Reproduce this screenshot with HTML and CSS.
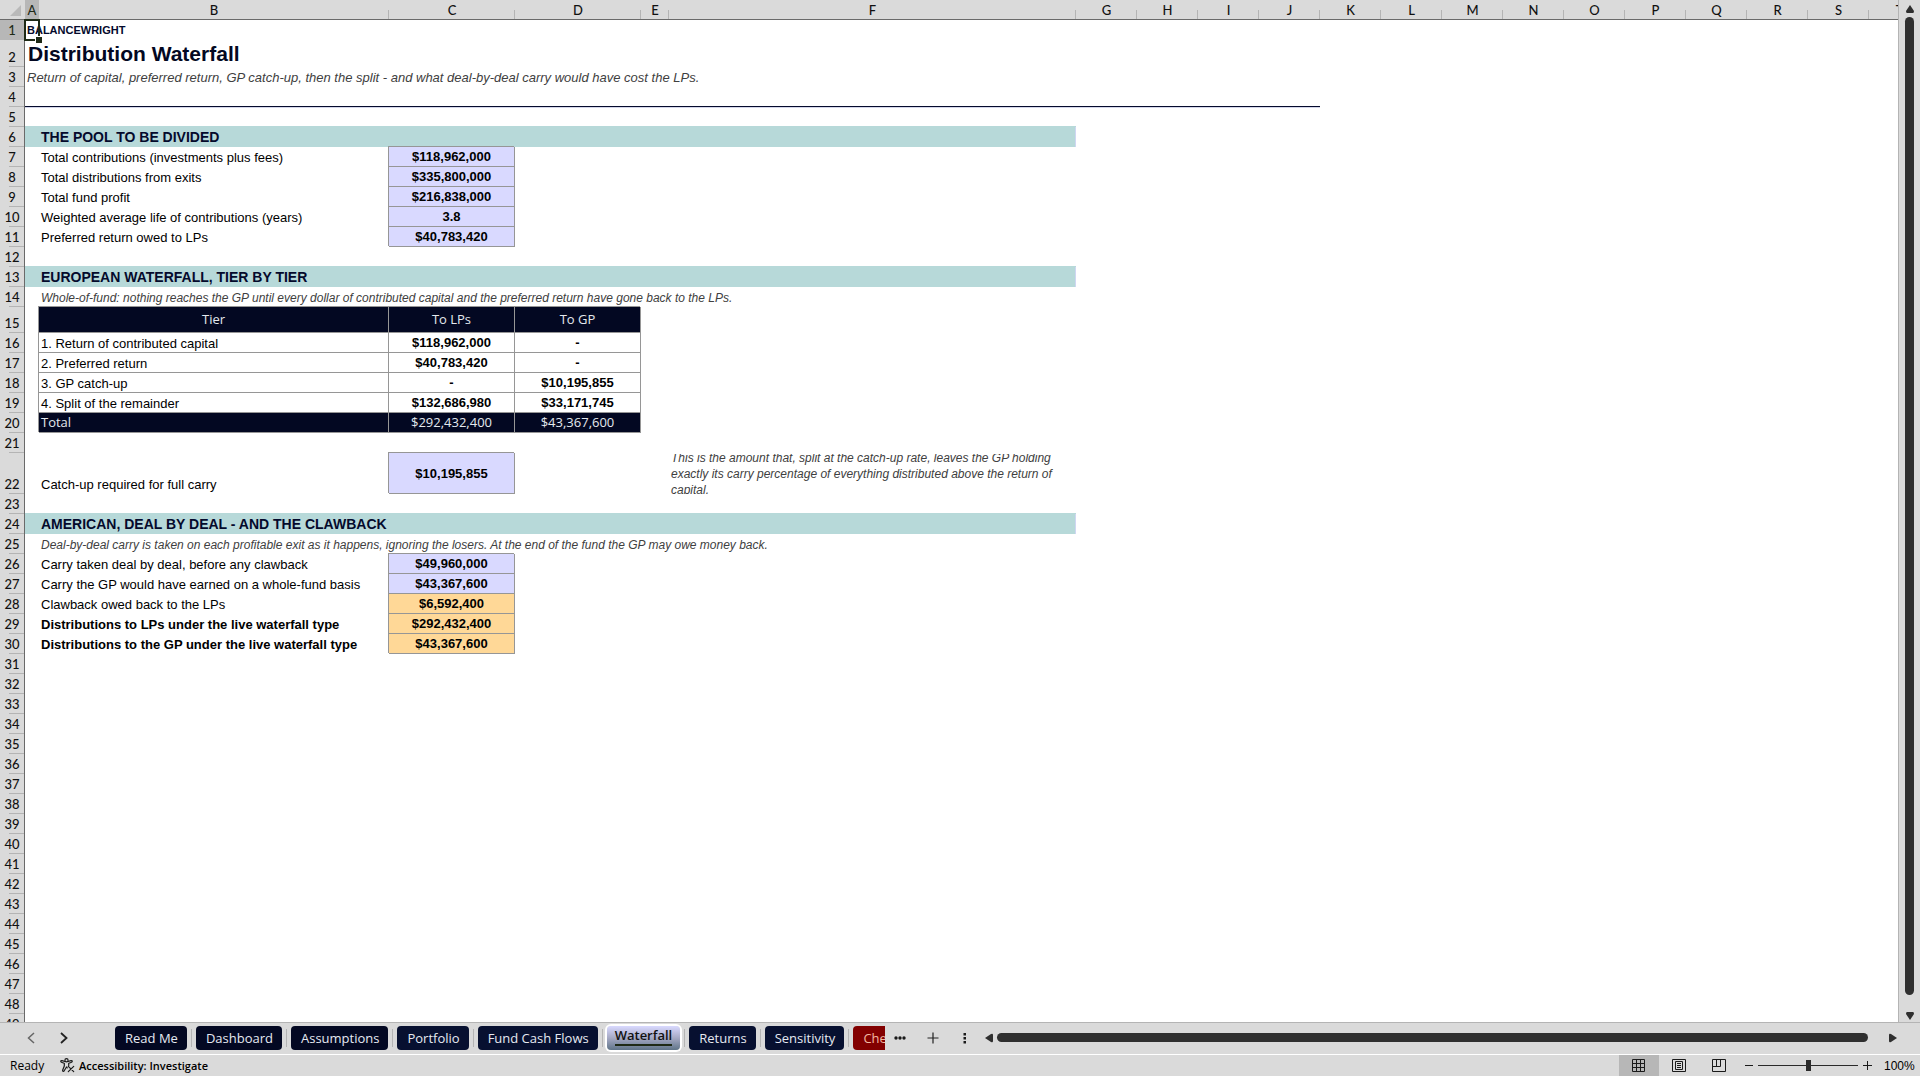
FILE: index.html
```html
<!DOCTYPE html>
<html lang="en">
<head>
<meta charset="utf-8">
<title>Distribution Waterfall</title>
<link rel="stylesheet" href="styles.css">
</head>
<body>
<main class="workspace">
<div class="sheet">
<table class="grid">
<colgroup><col class="w-head"><col class="w-a"><col class="w-b"><col class="w-c"><col class="w-c"><col class="w-e"><col class="w-f"><col class="w-std" span="14"></colgroup>
<thead>
<tr><th class="corner"><svg viewBox="0 0 11 11" width="11" height="11"><path d="M11 0V11H0Z" fill="#b9b9b9"/></svg></th><th class="current">A</th><th>B</th><th>C</th><th>D</th><th>E</th><th>F</th><th>G</th><th>H</th><th>I</th><th>J</th><th>K</th><th>L</th><th>M</th><th>N</th><th>O</th><th>P</th><th>Q</th><th>R</th><th>S</th><th>T</th></tr>
</thead>
<tbody>
<tr><th class="current">1</th><td class="brand active-cell">BALANCEWRIGHT</td></tr>
<tr class="title-row"><th>2</th><td class="title" colspan="6">Distribution Waterfall</td></tr>
<tr><th>3</th><td class="subtitle" colspan="6">Return of capital, preferred return, GP catch-up, then the split - and what deal-by-deal carry would have cost the LPs.</td></tr>
<tr><th>4</th><td class="rule" colspan="10"></td></tr>
<tr><th>5</th></tr>
<tr><th>6</th><td class="section" colspan="6">THE POOL TO BE DIVIDED</td></tr>
<tr><th>7</th><td></td><td class="label">Total contributions (investments plus fees)</td><td class="num calc">$118,962,000</td></tr>
<tr><th>8</th><td></td><td class="label">Total distributions from exits</td><td class="num calc">$335,800,000</td></tr>
<tr><th>9</th><td></td><td class="label">Total fund profit</td><td class="num calc">$216,838,000</td></tr>
<tr><th>10</th><td></td><td class="label">Weighted average life of contributions (years)</td><td class="num calc">3.8</td></tr>
<tr><th>11</th><td></td><td class="label">Preferred return owed to LPs</td><td class="num calc">$40,783,420</td></tr>
<tr><th>12</th></tr>
<tr><th>13</th><td class="section" colspan="6">EUROPEAN WATERFALL, TIER BY TIER</td></tr>
<tr><th>14</th><td></td><td class="note" colspan="5">Whole-of-fund: nothing reaches the GP until every dollar of contributed capital and the preferred return have gone back to the LPs.</td></tr>
<tr class="tier-head"><th>15</th><td></td><td class="num dark">Tier</td><td class="num dark">To LPs</td><td class="num dark">To GP</td></tr>
<tr><th>16</th><td></td><td class="label boxed">1. Return of contributed capital</td><td class="num">$118,962,000</td><td class="num">-</td></tr>
<tr><th>17</th><td></td><td class="label boxed">2. Preferred return</td><td class="num">$40,783,420</td><td class="num">-</td></tr>
<tr><th>18</th><td></td><td class="label boxed">3. GP catch-up</td><td class="num">-</td><td class="num">$10,195,855</td></tr>
<tr><th>19</th><td></td><td class="label boxed">4. Split of the remainder</td><td class="num">$132,686,980</td><td class="num">$33,171,745</td></tr>
<tr><th>20</th><td></td><td class="num dark dark-label">Total</td><td class="num dark">$292,432,400</td><td class="num dark">$43,367,600</td></tr>
<tr><th>21</th></tr>
<tr class="catchup-row"><th>22</th><td></td><td class="label">Catch-up required for full carry</td><td class="num calc">$10,195,855</td><td></td><td></td><td class="remark"><div class="clip"><p>This is the amount that, split at the catch-up rate, leaves the GP holding exactly its carry percentage of everything distributed above the return of capital.</p></div></td></tr>
<tr><th>23</th></tr>
<tr><th>24</th><td class="section" colspan="6">AMERICAN, DEAL BY DEAL - AND THE CLAWBACK</td></tr>
<tr><th>25</th><td></td><td class="note" colspan="5">Deal-by-deal carry is taken on each profitable exit as it happens, ignoring the losers. At the end of the fund the GP may owe money back.</td></tr>
<tr><th>26</th><td></td><td class="label">Carry taken deal by deal, before any clawback</td><td class="num calc">$49,960,000</td></tr>
<tr><th>27</th><td></td><td class="label">Carry the GP would have earned on a whole-fund basis</td><td class="num calc">$43,367,600</td></tr>
<tr><th>28</th><td></td><td class="label">Clawback owed back to the LPs</td><td class="num result">$6,592,400</td></tr>
<tr><th>29</th><td></td><td class="label strong">Distributions to LPs under the live waterfall type</td><td class="num result">$292,432,400</td></tr>
<tr><th>30</th><td></td><td class="label strong">Distributions to the GP under the live waterfall type</td><td class="num result">$43,367,600</td></tr>
<tr><th>31</th></tr>
<tr><th>32</th></tr>
<tr><th>33</th></tr>
<tr><th>34</th></tr>
<tr><th>35</th></tr>
<tr><th>36</th></tr>
<tr><th>37</th></tr>
<tr><th>38</th></tr>
<tr><th>39</th></tr>
<tr><th>40</th></tr>
<tr><th>41</th></tr>
<tr><th>42</th></tr>
<tr><th>43</th></tr>
<tr><th>44</th></tr>
<tr><th>45</th></tr>
<tr><th>46</th></tr>
<tr><th>47</th></tr>
<tr><th>48</th></tr>
<tr><th>49</th></tr>
</tbody>
</table>
</div>
<div class="vscroll">
<svg width="10" height="8" viewBox="0 0 10 8"><path d="M5 0L9 6Q9 8 8 8H2Q1 8 1 6Z" fill="#2f2f2f"/></svg>
<div class="vthumb"></div>
<svg width="10" height="8" viewBox="0 0 10 8"><path d="M5 8L9 2Q9 0 8 0H2Q1 0 1 2Z" fill="#2f2f2f"/></svg>
</div>
</main>
<nav class="tabbar" aria-label="Sheets">
<div class="tab-nav">
<button aria-label="Previous sheet"><svg width="8" height="12" viewBox="0 0 8 12"><path d="M7 1L1.500 6L7 11" fill="none" stroke="#666" stroke-width="1.500"/></svg></button>
<button aria-label="Next sheet"><svg width="8" height="12" viewBox="0 0 8 12"><path d="M1 1L6.500 6L1 11" fill="none" stroke="#222" stroke-width="1.800"/></svg></button>
</div>
<div class="tabs">
<button class="tab">Read Me</button>
<button class="tab">Dashboard</button>
<button class="tab">Assumptions</button>
<button class="tab mid">Portfolio</button>
<button class="tab mid">Fund Cash Flows</button>
<button class="tab selected"><span>Waterfall</span></button>
<button class="tab mid">Returns</button>
<button class="tab mid">Sensitivity</button>
<button class="tab red">Checks</button>
</div>
<div class="tab-tools">
<button aria-label="More sheets"><svg width="12" height="12" viewBox="0 0 12 12" fill="#1a1a1a"><circle cx="2" cy="6" r="1.700"/><circle cx="6" cy="6" r="1.700"/><circle cx="10" cy="6" r="1.700"/></svg></button>
<button aria-label="New sheet"><svg width="12" height="12" viewBox="0 0 12 12"><path d="M6 .5V11.500M.5 6H11.500" stroke="#222" stroke-width="1.200"/></svg></button>
<button aria-label="Resize tab area"><svg width="4" height="12" viewBox="0 0 4 12" fill="#1a1a1a"><path d="M.5 1h2.500v2.500h-2.500zM.5 5h2.500v2.500h-2.500zM.5 9h2.500v2.500h-2.500z"/></svg></button>
</div>
<div class="hscroll">
<svg width="8" height="10" viewBox="0 0 8 10"><path d="M0 5L6 1Q8 0 8 2V8Q8 10 6 9Z" fill="#2f2f2f"/></svg>
<div class="hthumb"></div>
<svg width="8" height="10" viewBox="0 0 8 10"><path d="M8 5L2 1Q0 0 0 2V8Q0 10 2 9Z" fill="#2f2f2f"/></svg>
</div>
</nav>
<footer class="status">
<span class="ready">Ready</span>
<button class="access"><svg width="15" height="15" viewBox="0 0 15 15" fill="none" stroke="#1a1a1a" stroke-width="1.200" stroke-linejoin="round" stroke-linecap="round"><circle cx="6.500" cy="2.300" r="1.600"/><path d="M5 3.500L2 2.600Q.6 2.500 .8 3.600Q.9 4.100 4.300 5.300V8L2.600 12.200Q2.600 13.600 3.900 13.200L6.500 9L7.300 9.800M8 3.500L11 2.600Q12.400 2.500 12.200 3.600Q12.100 4.100 8.700 5.300V7.500M8.300 8.300L13.700 13.700M13.700 8.300L8.300 13.700"/></svg><span>Accessibility: Investigate</span></button>
<div class="views">
<button class="view on" aria-label="Normal view"><svg width="14" height="14" viewBox="0 0 14 14" fill="none" stroke="#1a1a1a"><path d="M.5 .5h12v12h-12zM4.500 .5v12M8.500 .5v12M.5 4.500h12M.5 8.500h12"/></svg></button>
<button class="view" aria-label="Page layout"><svg width="14" height="14" viewBox="0 0 14 14" fill="none" stroke="#1a1a1a"><path d="M.5 .5h13v12h-13zM3.500 2.500h7v8h-7zM5 4.500h4M5 6.500h4M5 8.500h4"/></svg></button>
<button class="view" aria-label="Page break preview"><svg width="14" height="14" viewBox="0 0 14 14" fill="none" stroke="#1a1a1a"><path d="M.5 .5h13v12h-13zM.5 7.500h8v-7M4.500 .5v7"/></svg></button>
</div>
<div class="zoom">
<button aria-label="Zoom out"><svg width="8" height="9" viewBox="0 0 8 9"><path d="M0 4.500H8" stroke="#1a1a1a"/></svg></button>
<input type="range" min="0" max="100" value="50" aria-label="Zoom">
<button aria-label="Zoom in"><svg width="9" height="9" viewBox="0 0 9 9"><path d="M0 4.500H9M4.500 0V9" stroke="#1a1a1a"/></svg></button>
<span class="percent">100%</span>
</div>
</footer>
</body>
</html>
```
FILE: styles.css
```css
* { box-sizing: border-box; }

body {
  margin: 0;
  height: 100vh;
  display: flex;
  flex-direction: column;
  overflow: hidden;
  background: #dadada;
  color: #000;
  font-family: "Liberation Sans", Arial, sans-serif;
  font-size: 13px;
}

button {
  border: 0;
  padding: 0;
  background: none;
  color: inherit;
  font: inherit;
  display: flex;
  align-items: center;
  justify-content: center;
}

svg { display: block; flex: none; }

.workspace { flex: 1; min-height: 0; display: flex; }

.sheet {
  flex: 1;
  min-width: 0;
  overflow: hidden;
  background: #fff;
  border-right: 1px solid #b4b4b4;
}

/* Grid */
.grid { width: 1930px; table-layout: fixed; border-collapse: separate; border-spacing: 0; }
.w-head { width: 25px; }
.w-a { width: 14px; }
.w-b { width: 350px; }
.w-c { width: 126px; }
.w-e { width: 28px; }
.w-f { width: 407px; }
.w-std { width: 61px; }

.grid th, .grid td { height: 20px; padding: 0; line-height: 19px; white-space: nowrap; }

.grid th {
  font-family: Lato, "Open Sans", sans-serif;
  font-size: 13px;
  font-weight: 500;
  color: #111;
  text-align: center;
}
.grid thead th {
  background: linear-gradient(#b4b4b4, #b4b4b4) right bottom / 1px 9px no-repeat #dadada;
  border-bottom: 1px solid #6a6a6a;
  padding-top: 1px;
  line-height: 18px;
}
.grid tbody th {
  background: linear-gradient(#b4b4b4, #b4b4b4) right bottom / 15px 1px no-repeat #dadada;
  border-right: 1px solid #6a6a6a;
  vertical-align: bottom;
}
.grid thead .current, .grid tbody .current { background: #b7b7b7; color: #1e2a16; }
.grid thead .corner { background: #dadada; vertical-align: middle; }
.corner svg { margin-left: 10px; }

.grid .title-row td, .grid .title-row th { height: 27px; }
.grid .tier-head td, .grid .tier-head th { height: 26px; }
.grid .catchup-row td, .grid .catchup-row th { height: 41px; }

.grid td { vertical-align: bottom; }
.grid .brand { font-size: 11px; font-weight: 700; color: #040a2c; padding-left: 2px; }
.active-cell { position: relative; }
.active-cell::before {
  content: "";
  position: absolute;
  inset: -1px;
  border: 2px solid #1e2a16;
}
.active-cell::after {
  content: "";
  position: absolute;
  right: -3px;
  bottom: -3px;
  width: 6px;
  height: 6px;
  background: #1e2a16;
  border: 1px solid #fff;
  border-width: 1px 0 0 1px;
}
.grid .title { font-size: 21px; line-height: 26px; font-weight: 700; color: #030822; padding-left: 3px; }
.grid .subtitle { font-size: 13px; font-style: italic; color: #404040; padding-left: 2px; }
.grid .rule { border-bottom: 1px solid #040a2c; box-shadow: 0 1px 0 #d4d6ea; }
.grid .section {
  background: #b7d9d9;
  font-size: 14px;
  font-weight: 700;
  color: #040a2c;
  padding-left: 16px;
  box-shadow: inset -1px 0 0 #cfd6f2, 0 -1px 0 #b7d9d9;
}
.grid .label { padding-left: 2px; }
.grid .boxed { line-height: 17px; }
.grid .strong { font-weight: 700; }
.grid .note { font-size: 12px; line-height: 17px; font-style: italic; color: #404040; padding-left: 2px; }

.grid .num, .grid .boxed {
  border-right: 1px solid #969696;
  border-bottom: 1px solid #969696;
  box-shadow: -1px -1px 0 #969696;
}
.grid .num { text-align: center; font-weight: 700; line-height: 17px; vertical-align: middle; }
.grid .calc { background: #d9d9ff; }
.grid .result { background: #ffd897; }
.grid .dark { background: #030822; color: #e4e8ee; font-family: "Open Sans", sans-serif; font-weight: 400; }
.grid .dark-label { text-align: left; padding-left: 2px; }

.clip { height: 40px; overflow: hidden; display: flex; align-items: center; }
.clip p {
  margin: 0;
  padding: 0 2px;
  font-size: 12px;
  line-height: 16px;
  font-style: italic;
  color: #404040;
  white-space: normal;
}

/* Scroll bars */
.vscroll { width: 21px; padding: 5px 0 2px; display: flex; flex-direction: column; align-items: center; gap: 4px; }
.vthumb { flex: 1; width: 9px; margin-bottom: 13px; border-radius: 5px; background: #2f2f2f; }
.hscroll { flex: 1; display: flex; align-items: center; gap: 4px; padding-right: 23px; }
.hthumb { flex: 1; height: 9px; margin-right: 17px; border-radius: 5px; background: #2f2f2f; }

/* Sheet tabs */
.tabbar {
  height: 33px;
  padding-bottom: 2px;
  display: flex;
  align-items: center;
  border-top: 1px solid #b4b4b4;
  border-bottom: 1px solid #fff;
}
.tab-nav { width: 115px; padding-left: 27px; display: flex; gap: 25px; }
.tabs { width: 770px; height: 29px; display: flex; align-items: center; gap: 9px; overflow: hidden; }
.tab {
  position: relative;
  flex: none;
  height: 24px;
  padding: 0 9px 0 10px;
  border-radius: 4px;
  background: #030822;
  color: #e6eaf2;
  font-family: "Open Sans", sans-serif;
  font-size: 13px;
}
.tab + .tab::before {
  content: "";
  position: absolute;
  left: -5px;
  top: 3px;
  width: 1px;
  height: 18px;
  background: #b4b4b4;
}
.mid { background: #071030; }
.red { background: #820000; color: #f3b9a0; }
.selected {
  background: linear-gradient(#d9d9ff, #a5a9c4 50%, #5f7488);
  box-shadow: 0 0 0 2px #fff;
  color: #111;
  font-weight: 600;
  padding: 0 8px 2px;
}
.selected span { line-height: 17px; border-bottom: 2px solid #1e2a16; }
.tab-tools { width: 100px; padding-left: 9px; display: flex; align-items: center; gap: 21px; }
.tab-tools button:last-child { margin-left: 3px; }

/* Status bar */
.status {
  height: 21px;
  display: flex;
  align-items: center;
  font-family: "Open Sans", sans-serif;
  font-size: 12px;
}
.ready { width: 50px; padding-left: 10px; }
.access { gap: 4px; margin-left: 10px; font-size: 11px; font-weight: 600; }
.views { margin-left: auto; display: flex; height: 100%; }
.view { width: 40px; height: 100%; }
.on { background: #b7b7b7; }
.zoom { display: flex; align-items: center; gap: 5px; padding-left: 6px; }
.zoom input {
  appearance: none;
  width: 100px;
  height: 11px;
  margin: 0;
  background: linear-gradient(#2a2a2a, #2a2a2a) center / 100% 1px no-repeat;
}
.zoom input::-webkit-slider-thumb { appearance: none; width: 5px; height: 11px; background: #2a2a2a; }
.percent { width: 43px; padding-left: 7px; font-family: "Liberation Sans", Arial, sans-serif; }
```
